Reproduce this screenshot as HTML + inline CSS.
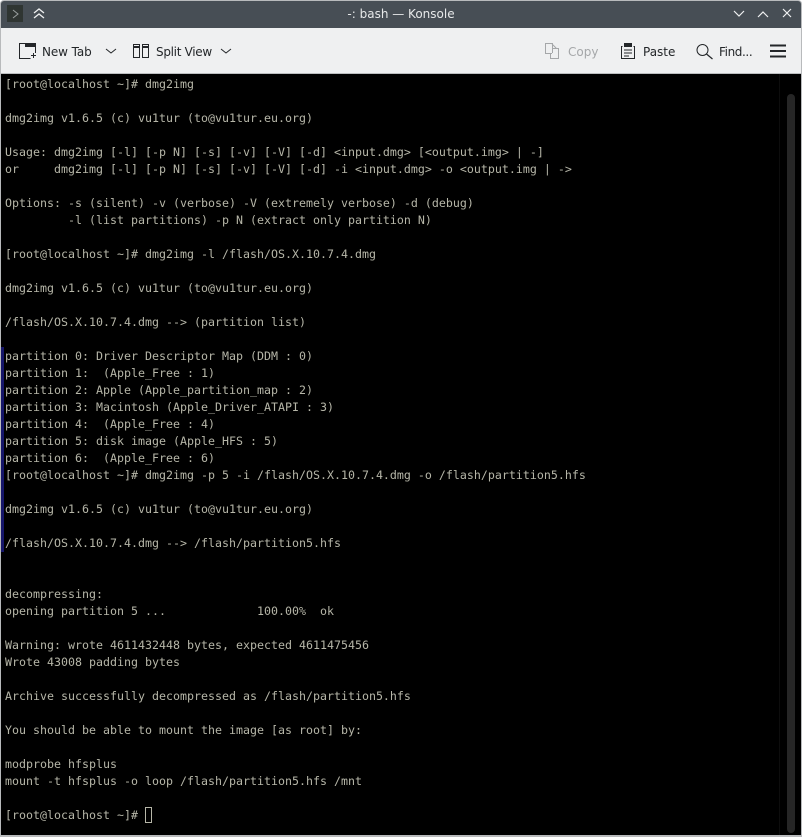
<!DOCTYPE html>
<html><head><meta charset="utf-8">
<style>
html,body{margin:0;padding:0;background:#fff;}
#w{position:relative;width:802px;height:837px;overflow:hidden;background:#fff;}
#frame{position:absolute;left:0;top:0;width:802px;height:837px;background:#b8babc;border-radius:4px 4px 0 0;}
#title{position:absolute;left:1px;top:1px;width:800px;height:27px;background:#474e55;border-radius:3px 3px 0 0;}
#ttext{position:absolute;left:0;top:6px;width:802px;text-align:center;font:12px/16px "DejaVu Sans",sans-serif;color:#e6e8e9;}
#bar{position:absolute;left:1px;top:28px;width:800px;height:45px;background:#eff0f1;}
#line{position:absolute;left:1px;top:73px;width:800px;height:1px;background:#bcbec0;}
#term{position:absolute;left:1px;top:74px;width:800px;height:761px;background:#000;}
pre{position:absolute;left:5px;top:76px;margin:0;font:11.63px/17px "DejaVu Sans Mono","Liberation Mono",monospace;color:#b6b6a8;}
.t{position:absolute;font:12px/16px "DejaVu Sans",sans-serif;color:#232629;white-space:nowrap;}
svg{position:absolute;left:0;top:0;}
</style></head><body>
<div id="w">
<div id="frame"></div>
<div id="title"></div>
<div id="ttext">-: bash — Konsole</div>
<div id="bar"></div>
<div id="line"></div>
<div id="term"></div>
<div style="position:absolute;left:1px;top:347px;width:3px;height:205px;background:#16166a"></div>
<div style="position:absolute;left:787px;top:94px;width:8px;height:739px;background:#262626;border-radius:4px"></div>
<div style="position:absolute;left:779px;top:74px;width:1px;height:761px;background:#0d0d0d"></div>
<div class="t" style="left:42px;top:44px;letter-spacing:-.1px">New Tab</div>
<div class="t" style="left:156px;top:44px;letter-spacing:-.3px">Split View</div>
<div class="t" style="left:568px;top:44px;color:#a5a7a9">Copy</div>
<div class="t" style="left:643px;top:44px">Paste</div>
<div class="t" style="left:719px;top:44px;letter-spacing:-.4px">Find...</div>
<svg width="802" height="837" viewBox="0 0 802 837" fill="none">
<rect x="7" y="5" width="16" height="17" fill="#2f3532"/>
<path d="M13 10l5 4-5 4" stroke="#9aa0a0" stroke-width="1"/>
<path d="M34 13l5-4 5 4M34 18l5-4 5 4" stroke="#eff0f1" stroke-width="1.3"/>
<path d="M734 11l5 5 5-5" stroke="#eff0f1" stroke-width="1.2"/>
<path d="M758 17l5-5 5 5" stroke="#eff0f1" stroke-width="1.2"/>
<path d="M783 9l8 8M791 9l-8 8" stroke="#eff0f1" stroke-width="1.2"/>
<path d="M30.5 58.500H19.500V43.500H35.500V53" stroke="#232629"/>
<path d="M25 44h10v3H25z" fill="#232629"/>
<path d="M33.500 53v5M31 55.500h5" stroke="#232629"/>
<path d="M106 49l5 4 5-4" stroke="#232629"/>
<rect x="133.500" y="44.500" width="6" height="13" stroke="#232629"/>
<rect x="142.500" y="44.500" width="6" height="13" stroke="#232629"/>
<path d="M133 47h7M142 47h7" stroke="#232629" stroke-width="2"/>
<path d="M221 49l5 4 5-4" stroke="#232629"/>
<path d="M552.500 53V43.500H545.500V53.500H552M552 44l4 4V48.500M552.500 48.500H558.500V58.500H550.500V54" stroke="#a5a7a9"/>
<path d="M622.500 46.500H621.500V58.500H634.500V46.500H633.500" stroke="#232629"/>
<rect x="624" y="43" width="8" height="4" fill="#232629"/>
<path d="M624 50h8M624 53h8M624 56h5" stroke="#232629"/>
<circle cx="702.500" cy="50" r="5.500" stroke="#232629"/>
<path d="M706.500 54l6 5" stroke="#232629" stroke-width="1.200"/>
<path d="M770 45.500h16M770 51h16M770 56.500h16" stroke="#232629" stroke-width="2"/>
<rect x="145.500" y="807.500" width="6" height="15" stroke="#b6b6a8"/>
</svg>
<pre>[root@localhost ~]# dmg2img

dmg2img v1.6.5 (c) vu1tur (to@vu1tur.eu.org)

Usage: dmg2img [-l] [-p N] [-s] [-v] [-V] [-d] &lt;input.dmg&gt; [&lt;output.img&gt; | -]
or     dmg2img [-l] [-p N] [-s] [-v] [-V] [-d] -i &lt;input.dmg&gt; -o &lt;output.img | -&gt;

Options: -s (silent) -v (verbose) -V (extremely verbose) -d (debug)
         -l (list partitions) -p N (extract only partition N)

[root@localhost ~]# dmg2img -l /flash/OS.X.10.7.4.dmg

dmg2img v1.6.5 (c) vu1tur (to@vu1tur.eu.org)

/flash/OS.X.10.7.4.dmg --&gt; (partition list)

partition 0: Driver Descriptor Map (DDM : 0)
partition 1:  (Apple_Free : 1)
partition 2: Apple (Apple_partition_map : 2)
partition 3: Macintosh (Apple_Driver_ATAPI : 3)
partition 4:  (Apple_Free : 4)
partition 5: disk image (Apple_HFS : 5)
partition 6:  (Apple_Free : 6)
[root@localhost ~]# dmg2img -p 5 -i /flash/OS.X.10.7.4.dmg -o /flash/partition5.hfs

dmg2img v1.6.5 (c) vu1tur (to@vu1tur.eu.org)

/flash/OS.X.10.7.4.dmg --&gt; /flash/partition5.hfs


decompressing:
opening partition 5 ...             100.00%  ok

Warning: wrote 4611432448 bytes, expected 4611475456
Wrote 43008 padding bytes

Archive successfully decompressed as /flash/partition5.hfs

You should be able to mount the image [as root] by:

modprobe hfsplus
mount -t hfsplus -o loop /flash/partition5.hfs /mnt

[root@localhost ~]# </pre>
</div>
</body></html>
